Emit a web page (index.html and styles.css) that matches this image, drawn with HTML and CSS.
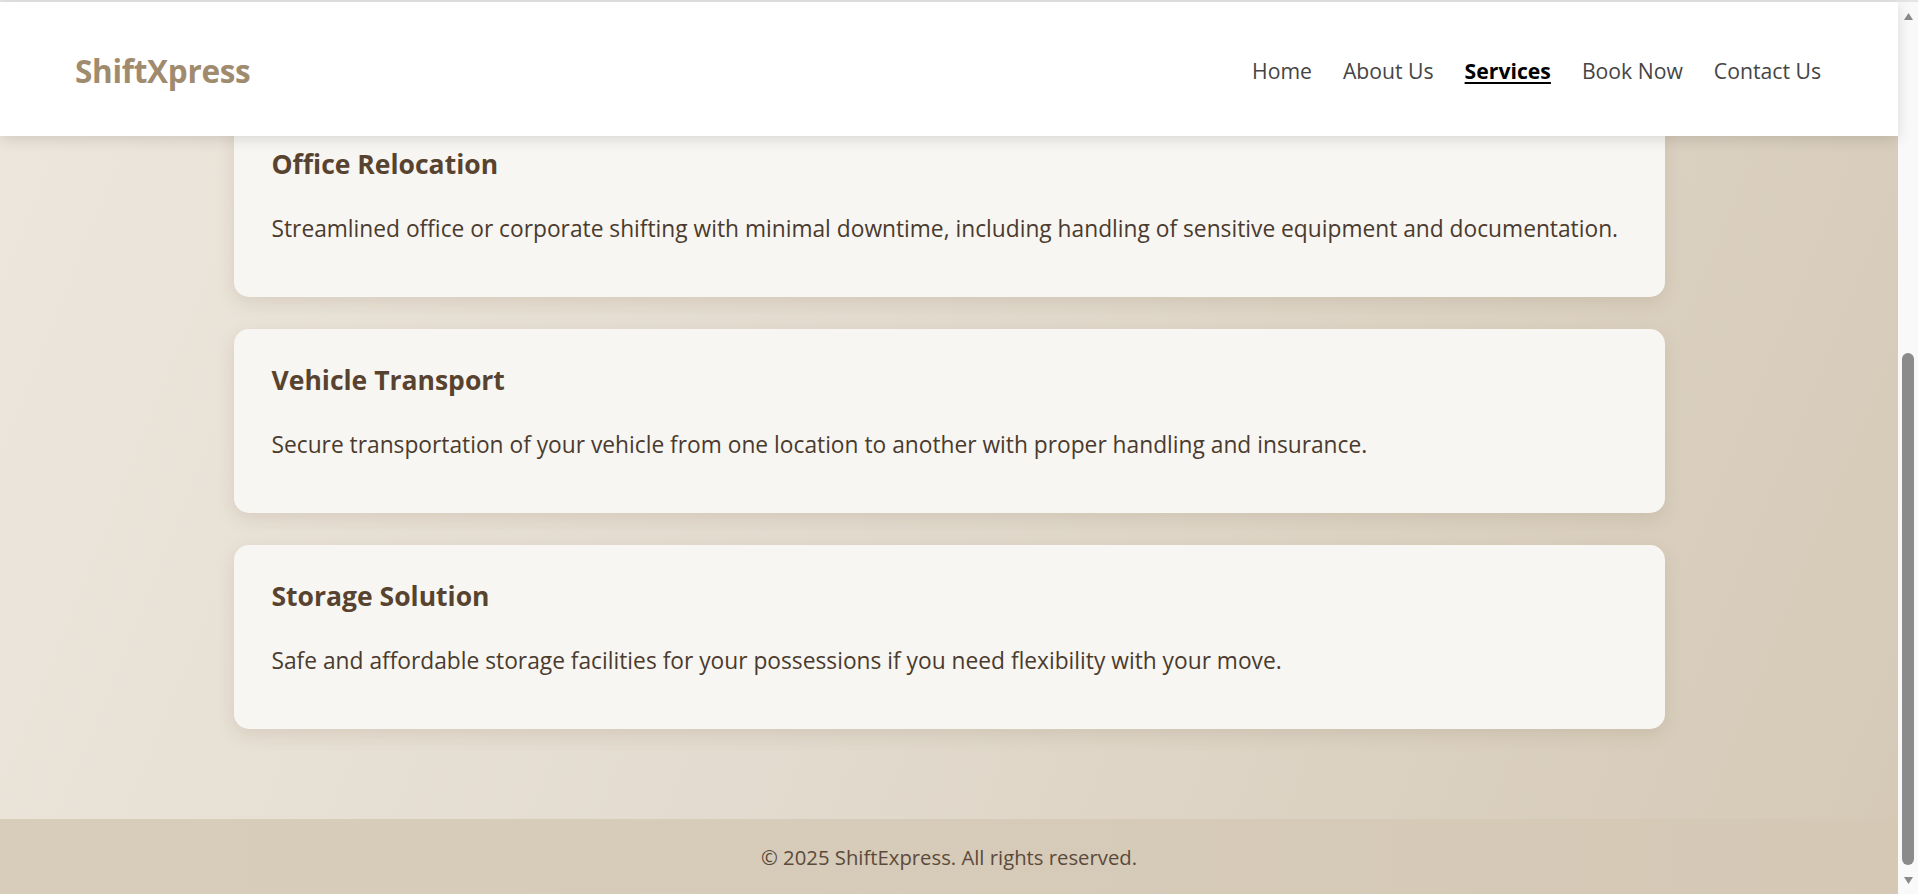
FILE: index.html
```html
<!DOCTYPE html>
<html lang="en">
<head>
<meta charset="utf-8">
<title>Services - ShiftXpress</title>
<link rel="stylesheet" href="styles.css">
</head>
<body>
<div class="app">
  <div class="page">
    <header class="site-header">
      <div class="logo">ShiftXpress</div>
      <nav class="nav">
        <a href="#" class="nav-link">Home</a>
        <a href="#" class="nav-link">About Us</a>
        <a href="#" class="nav-link active">Services</a>
        <a href="#" class="nav-link">Book Now</a>
        <a href="#" class="nav-link">Contact Us</a>
      </nav>
    </header>
    <div class="viewport">
      <main class="services">
        <div class="card-list">
          <section class="card">
            <h3 class="card-title">Office Relocation</h3>
            <p class="card-text">Streamlined office or corporate shifting with minimal downtime, including handling of sensitive equipment and documentation.</p>
          </section>
          <section class="card">
            <h3 class="card-title">Vehicle Transport</h3>
            <p class="card-text">Secure transportation of your vehicle from one location to another with proper handling and insurance.</p>
          </section>
          <section class="card">
            <h3 class="card-title">Storage Solution</h3>
            <p class="card-text">Safe and affordable storage facilities for your possessions if you need flexibility with your move.</p>
          </section>
        </div>
      </main>
      <footer class="site-footer">
        <p class="footer-text">&copy; 2025 ShiftExpress. All rights reserved.</p>
      </footer>
    </div>
  </div>
  <div class="scrollbar" aria-hidden="true">
    <div class="sb-button">
      <svg width="9" height="7" viewBox="0 0 9 7"><polygon points="4.5,0 9,7 0,7" fill="#8a8a8a"/></svg>
    </div>
    <div class="sb-track">
      <div class="sb-thumb"></div>
    </div>
    <div class="sb-button sb-button-down">
      <svg width="9" height="7" viewBox="0 0 9 7"><polygon points="0,0 9,0 4.5,7" fill="#8a8a8a"/></svg>
    </div>
  </div>
</div>
</body>
</html>
```
FILE: styles.css
```css
html, body {
  margin: 0;
  height: 100%;
  overflow: hidden;
}

body {
  font-family: "Segoe UI", "Open Sans", "Noto Sans", sans-serif;
  color: #4a3b2e;
  background: #ffffff;
}

.app {
  height: 100vh;
  box-sizing: border-box;
  border-top: 2px solid #e4e4e4;
  display: flex;
}

.page {
  flex: 1;
  min-width: 0;
  display: flex;
  flex-direction: column;
}

.site-header {
  position: relative;
  z-index: 2;
  flex-shrink: 0;
  height: 134px;
  background: #ffffff;
  box-shadow: 0 3px 14px rgba(0, 0, 0, 0.13);
  display: flex;
  align-items: center;
  justify-content: space-between;
  padding: 0 77px 0 75px;
}

.logo {
  font-size: 31.5px;
  font-weight: 700;
  color: #a08b6e;
  letter-spacing: -0.3px;
  margin-top: 2px;
}

.nav {
  display: flex;
  gap: 31px;
  margin-top: 3px;
}

.nav-link {
  font-size: 21.2px;
  color: #454545;
  text-decoration: none;
}

.nav-link.active {
  color: #000000;
  font-weight: 700;
  text-decoration: underline;
  text-decoration-thickness: 2px;
  text-underline-offset: 3px;
}

.viewport {
  flex: 1;
  min-height: 0;
  overflow: hidden;
  display: flex;
  flex-direction: column;
  justify-content: flex-end;
  background: linear-gradient(112deg, #ede6dc 0%, #e3dbcf 45%, #d5c9b6 100%);
}

.services {
  flex-shrink: 0;
  padding: 40px 0 90px;
}

.card-list {
  width: 1431px;
  margin: 0 auto;
  display: flex;
  flex-direction: column;
  gap: 32px;
}

.card {
  box-sizing: border-box;
  height: 184px;
  background: #f8f6f2;
  border-radius: 15px;
  box-shadow: 0 6px 18px rgba(110, 90, 60, 0.14);
  padding: 34px 38px 0;
}

.card-title {
  margin: 0 0 29.5px;
  font-size: 26.5px;
  line-height: 1.3;
  font-weight: 700;
  color: #57432f;
}

.card-text {
  margin: 0;
  font-size: 22.75px;
  line-height: 1.6;
  color: #4a3b2e;
}

.site-footer {
  flex-shrink: 0;
  height: 75px;
  background: linear-gradient(90deg, #d8cdbb, #d5c9b6);
  display: flex;
  align-items: center;
  justify-content: center;
}

.footer-text {
  margin: 0;
  font-size: 20.3px;
  color: #5b4a3b;
}

.scrollbar {
  width: 20px;
  flex-shrink: 0;
  background: #f9f9f9;
  display: flex;
  flex-direction: column;
}

.sb-button {
  height: 28px;
  display: flex;
  align-items: center;
  justify-content: center;
  padding-left: 1px;
}

.sb-button-down {
  height: 28px;
}

.sb-track {
  flex: 1;
  display: flex;
  flex-direction: column;
  justify-content: flex-end;
  align-items: center;
  padding-bottom: 1px;
}

.sb-thumb {
  width: 12px;
  height: 512px;
  border-radius: 6px;
  background: #8b8b8b;
}
```
